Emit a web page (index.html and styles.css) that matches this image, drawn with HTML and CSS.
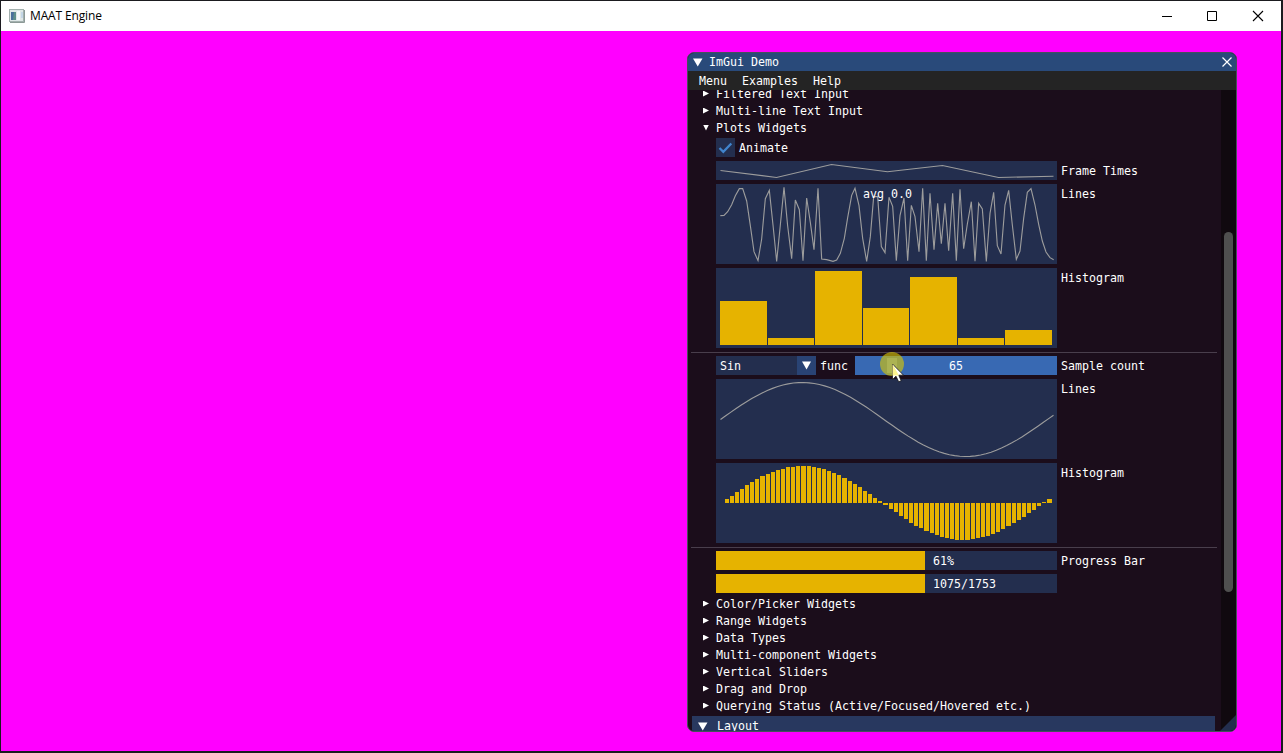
FILE: index.html
```html
<!DOCTYPE html>
<html lang="en">
<head>
<meta charset="utf-8">
<title>MAAT Engine</title>
<link rel="stylesheet" href="styles.css">
</head>
<body>
<div class="app">
  <header class="app-bar">
    <svg class="app-icon" width="16" height="14" viewBox="0 0 16 14"><rect x=".5" y=".5" width="14" height="12" fill="#dfe7e7" stroke="#a3b0ae"/><path d="M1 13.5h14.5V1" fill="none" stroke="#8c9996"/><rect x="2" y="3" width="5" height="8" fill="#4a6f9c"/><path d="M5 3h2v8H4z" fill="#5e8f8b"/><rect x="8" y="2" width="3" height="9" fill="#f4f8f9"/><rect x="12" y="3" width="2" height="6" fill="#c4d6e6"/></svg>
    <span class="app-title">MAAT Engine</span>
    <svg class="app-controls" width="104" height="12" viewBox="0 0 104 12"><path d="M0 6.500h10M45.500 1.500h9v9h-9z" fill="none" stroke="#000"/><path d="M91 1l10 10M101 1l-10 10" stroke="#000" stroke-width="1.100"/></svg>
  </header>
  <main class="viewport">
    <section class="panel">
      <div class="panel-title"><svg width="10" height="9" viewBox="0 0 10 9"><path d="M0 .5h9.500L4.750 8.500z" fill="#fff"/></svg><span>ImGui Demo</span><svg class="close" width="10" height="10" viewBox="0 0 10 10"><path d="M.5.5l9 9M9.500.5l-9 9" stroke="#fff" stroke-width="1.200"/></svg></div>
      <nav class="menu"><span>Menu</span><span>Examples</span><span>Help</span></nav>
      <div class="panel-body">
        <div class="content">
          <div class="tree">Filtered Text Input</div>
          <div class="tree">Multi-line Text Input</div>
          <div class="tree open">Plots Widgets</div>
          <div class="row"><span class="checkbox"><svg width="19" height="19" viewBox="0 0 19 19"><path d="M3.500 10l3.800 3.800L15.300 5.500" fill="none" stroke="#4184cc" stroke-width="2.300"/></svg></span><span>Animate</span></div>
          <div class="row"><svg class="plot" width="341" height="19" viewBox="716 161 341 19"><polyline class="line" points="720.500,170.500 776.500,177.500 831.500,164.500 887.500,171.700 942.500,165.500 998.500,177.500 1053.500,176.200"/></svg><span>Frame Times</span></div>
          <div class="row tall">
            <div class="plot-wrap">
              <svg class="plot" width="341" height="80" viewBox="18 87 1023 240"><polyline class="line line-x3" points="31,182 42,181 53,170 65,149 76,122 88,101 98,101 110,138 121,212 132,290 144,317 155,252 166,131 178,106 189,210 200,319 211,210 222,97 233,213 245,311 256,135 268,164 279,317 290,129 301,202 312,284 324,100 335,312 350,314 369,319 380,315 391,295 403,250 413,188 425,121 435,100 447,152 458,250 470,319 481,245 491,125 503,125 514,275 525,293 537,127 548,154 559,317 570,182 582,129 593,317 604,151 615,185 627,290 638,100 649,317 660,115 672,284 683,145 694,266 705,145 716,287 728,115 739,317 750,103 761,281 772,207 784,140 795,319 806,145 817,162 829,319 840,175 851,112 862,272 873,297 885,150 896,106 907,210 919,313 930,288 941,190 952,112 963,101 975,150 986,208 997,258 1008,291 1020,308 1031,314"/></svg>
              <span class="overlay">avg 0.0</span>
            </div><span>Lines</span>
          </div>
          <div class="row tall"><svg class="plot bars" width="341" height="80" viewBox="716 268 341 80"><path d="M720 301h47v44h-47zM768 338h46v7h-46zM815 271h47v74h-47zM863 308h46v37h-46zM910 277h47v68h-47zM958 338h46v7h-46zM1005 330h47v15h-47z"/></svg><span>Histogram</span></div>
          <div class="separator"></div>
          <div class="row">
            <div class="combo"><span>Sin</span><span class="combo-arrow"><svg width="9" height="9" viewBox="0 0 9 9"><path d="M0 .5h9L4.500 8.500z" fill="#fff"/></svg></span></div>
            <span class="func">func</span>
            <div class="slider"><span class="grab"></span>65
              <svg class="pointer" width="30" height="34" viewBox="0 0 30 34"><circle cx="13" cy="13" r="12" fill="#dac803" fill-opacity=".62"/><path d="M13.500 13v15.500l3.500-3.300 2.700 5.600 2.500-1.100-2.500-5.500h4.800z" fill="#fff" stroke="#171717" stroke-width=".8"/><path d="M13.500 13v11.500h6.500z" fill="#fff58e"/></svg>
            </div><span>Sample count</span>
          </div>
          <div class="row tall"><svg class="plot" width="341" height="80" viewBox="0 0 341 80"><polyline class="line" id="sine-line"/></svg><span>Lines</span></div>
          <div class="row tall"><svg class="plot bars" width="341" height="80" viewBox="0 0 341 80"><path id="sine-bars"/></svg><span>Histogram</span></div>
          <div class="separator"></div>
          <div class="row"><div class="progress"><span>61%</span></div><span>Progress Bar</span></div>
          <div class="row"><div class="progress"><span>1075/1753</span></div></div>
          <div class="tree">Color/Picker Widgets</div>
          <div class="tree">Range Widgets</div>
          <div class="tree">Data Types</div>
          <div class="tree">Multi-component Widgets</div>
          <div class="tree">Vertical Sliders</div>
          <div class="tree">Drag and Drop</div>
          <div class="tree">Querying Status (Active/Focused/Hovered etc.)</div>
          <div class="section"><svg width="10" height="9" viewBox="0 0 10 9"><path d="M0 .5h9.500L4.750 8.500z" fill="#fff"/></svg><span>Layout</span></div>
        </div>
        <div class="scrollbar"><div class="thumb"></div></div>
      </div>
      <svg class="resize" width="16" height="16" viewBox="0 0 16 16"><path d="M16 0v16H0z" fill="#232e4e"/></svg>
    </section>
  </main>
</div>
<script src="plots.js"></script>
</body>
</html>
```
FILE: styles.css
```css
* { box-sizing: border-box; }
body { margin: 0; background: #1b1b1f; overflow: hidden; }
svg { display: block; flex: none; }
.app { width: 1283px; height: 753px; padding: 1px 2px 2px 1px; display: flex; flex-direction: column; }
.app-bar { height: 30px; flex: none; background: #fff; display: flex; align-items: center; padding: 0 15px 0 8px; }
.app-title { margin-left: 5px; font: 12px/16px "Open Sans", "Noto Sans", sans-serif; letter-spacing: -.150px; color: #000; }
.app-controls { margin-left: auto; }
.viewport { flex: 1; background: #f0f; padding: 21px 44px 0 0; display: flex; justify-content: flex-end; }
.panel { position: relative; width: 550px; height: 680px; border: 1px solid #47505a; border-radius: 7px; overflow: hidden; background: #1b0d1b; color: #fff; display: flex; flex-direction: column; font: 11.63px/13px "DejaVu Sans Mono", monospace; white-space: nowrap; }
.panel-title { height: 18px; flex: none; background: #294a7a; display: flex; align-items: center; padding: 0 4px 0 5px; }
.panel-title span { margin-left: 6px; }
.close { margin-left: auto; }
.menu { height: 19px; flex: none; background: #242424; display: flex; align-items: center; gap: 15px; padding: 1px 0 0 11px; }
.panel-body { flex: 1; min-height: 0; display: flex; justify-content: space-between; overflow: hidden; }
.content { width: 529px; margin-top: -3px; padding-left: 3px; display: flex; flex-direction: column; gap: 4px; }
.content > * { flex: none; }
.tree { height: 13px; padding: 1px 0 0 12px; display: flex; align-items: center; line-height: 14px; }
.tree::before { content: ""; width: 6px; height: 6px; margin: 0 7px 1px 0; background: #fff; clip-path: polygon(0 0, 100% 50%, 0 100%); }
.tree.open::before { clip-path: polygon(0 0, 100% 0, 50% 100%); }
.row { height: 19px; padding-left: 25px; display: flex; gap: 4px; line-height: 21px; }
.row.tall { height: 80px; }
.checkbox { width: 19px; height: 19px; background: #232e4e; }
.plot { background: #232e4e; }
.line { fill: none; stroke: #9c9c9c; stroke-width: 1.150; }
.line-x3 { stroke-width: 3.400; }
.bars path { fill: #e6b300; }
.plot-wrap { position: relative; }
.overlay { position: absolute; left: 147px; top: 0; }
.separator { height: 1px; margin-bottom: -1px; background: #493e4c; }
.combo { width: 100px; height: 19px; background: #232e4e; display: flex; justify-content: space-between; padding-left: 4px; }
.combo-arrow { width: 19px; background: #294374; display: flex; align-items: center; justify-content: center; }
.func { width: 31px; }
.slider { position: relative; width: 202px; background: #3869b3; text-align: center; }
.grab { position: absolute; left: 32px; top: 2px; width: 10px; height: 15px; background: #6292d5; }
.pointer { position: absolute; left: 24px; top: -5px; z-index: 1; }
.progress { width: 341px; background: linear-gradient(90deg, #e6b300 209px, #232e4e 209px); padding-left: 217px; }
.section { height: 19px; margin: 0 2px 0 1px; background: #28385f; padding: 1px 0 0 6px; display: flex; align-items: center; gap: 9px; }
.section span { line-height: 15px; padding-top: 1px; }
.scrollbar { width: 15px; background: #10090f; padding: 142px 0 0 3px; }
.thumb { width: 9px; height: 360px; border-radius: 4.500px; background: #4f4f4f; }
.resize { position: absolute; right: 0; bottom: 0; }
```
FILE: plots.js
```js
const SAMPLES = 65;
const LEFT = 4, WIDTH = 333, AMP = 37;
const values = Array.from({ length: SAMPLES }, (_, i) => Math.sin(i * 0.1));

document.getElementById("sine-line").setAttribute("points",
  values.map((v, i) => `${LEFT + 0.5 + i * WIDTH / (SAMPLES - 1)},${40.5 - v * AMP}`).join(" "));

document.getElementById("sine-bars").setAttribute("d", values.map((v, i) => {
  const x0 = Math.floor(LEFT + i * WIDTH / SAMPLES);
  const x1 = Math.floor(LEFT + (i + 1) * WIDTH / SAMPLES) - 1;
  return `M${x0} 40H${x1}V${Math.round(40 - v * AMP)}H${x0}z`;
}).join(""));
```
